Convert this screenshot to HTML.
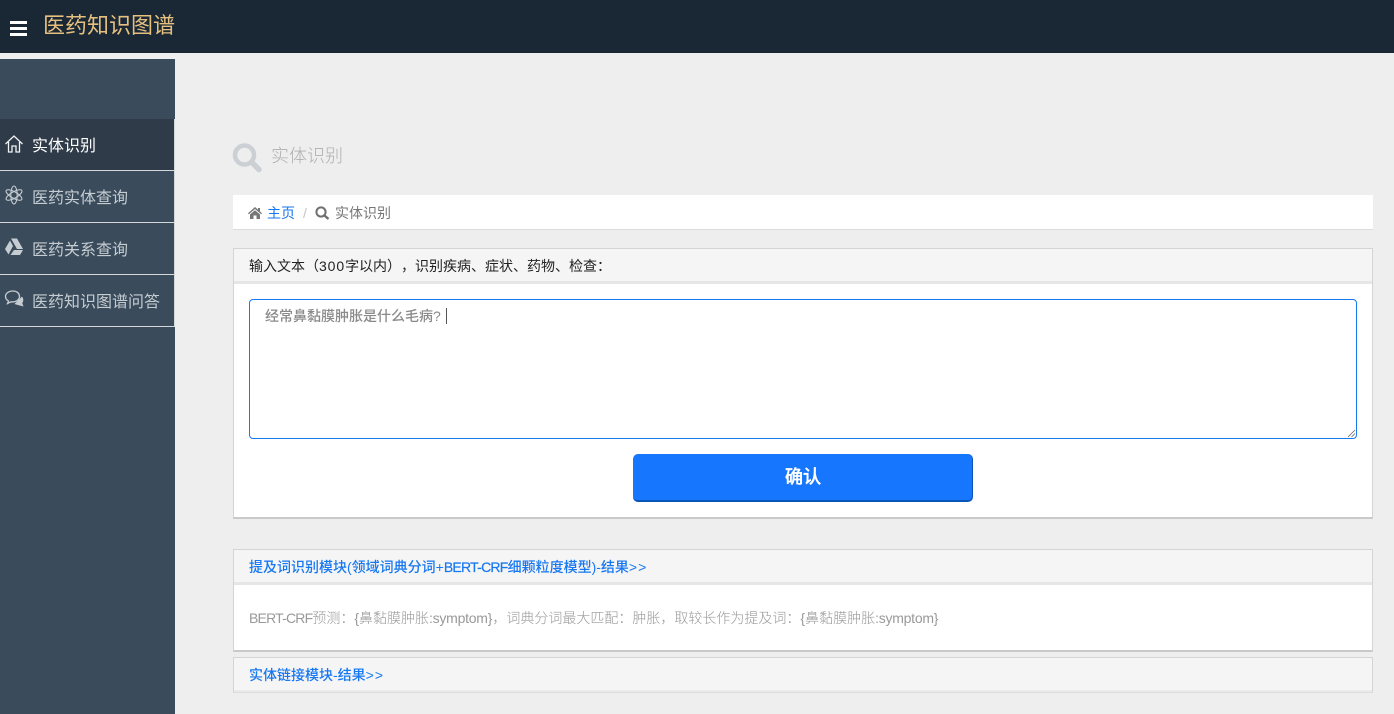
<!DOCTYPE html>
<html lang="zh"><head><meta charset="utf-8"><title>医药知识图谱</title>
<style>
*{box-sizing:border-box}
html,body{margin:0;padding:0;width:1394px;height:714px;overflow:hidden;background:#eeeeee;font-family:"Liberation Sans","Noto Sans CJK SC",sans-serif}
.a{position:absolute;white-space:nowrap;text-spacing-trim:space-all}
.z{font-family:"Liberation Sans","WenQuanYi Zen Hei",sans-serif}
.n{font-family:"Liberation Sans","Noto Sans CJK SC",sans-serif}
.item{position:absolute;left:0;width:175px;height:52px;border-bottom:1px solid #d5d8da;border-right:1px solid #d5d8da;background:#3a4b5b}
.item span{position:absolute;left:32px;top:16px;font-size:16px;line-height:24px;color:#c5ccd2}
.item svg{position:absolute;left:4px;top:14px}
.box{position:absolute;left:233px;width:1140px;background:#fff;border:1px solid #d4d4d4;border-bottom:2px solid #c9c9c9}
.head{background:#f5f5f5;border-bottom:3px solid #e6e6e6}
.l{letter-spacing:-.25px}
.b{letter-spacing:-.75px;-webkit-text-stroke:.2px #1677f2}
</style></head><body>
<div class="a" style="left:0;top:0;width:1394px;height:53px;background:#1a2735"></div>
<div class="a" style="left:10px;top:21px;width:17px;height:3px;background:#fff"></div>
<div class="a" style="left:10px;top:27px;width:17px;height:3px;background:#fff"></div>
<div class="a" style="left:10px;top:33px;width:17px;height:3px;background:#fff"></div>
<div class="a z" style="left:43px;top:12px;font-size:22px;line-height:28px;color:#e5c07f">医药知识图谱</div>

<div class="a" style="left:0;top:59px;width:175px;height:655px;background:#3a4b5b"></div>
<div class="item" style="top:119px;background:#2f3b48">
<svg style="top:15px" width="20" height="20" viewBox="0 0 20 20" fill="none" stroke="#f0f2f3" stroke-width="1.3"><path d="M1.5 10 L10 2 L18.500 10 M4.500 8 V18 H8 V12 H12 V18 H15.500 V8"/></svg>
<span style="color:#fff">实体识别</span></div>
<div class="item" style="top:171px">
<svg width="20" height="20" viewBox="0 0 20 20" fill="none" stroke="#c5ccd2" stroke-width="1.1"><ellipse cx="10" cy="10" rx="9" ry="3.200" transform="rotate(90 10 10)"/><ellipse cx="10" cy="10" rx="9" ry="3.200" transform="rotate(30 10 10)"/><ellipse cx="10" cy="10" rx="9" ry="3.200" transform="rotate(150 10 10)"/></svg>
<span>医药实体查询</span></div>
<div class="item" style="top:223px">
<svg width="20" height="20" viewBox="0 0 20 20" fill="#c5ccd2"><path d="M7 1.500H13L19 12H13Z M6 3.500L9 9L4.500 17.500L1 12Z M10 13H19L16 18H6.500Z"/></svg>
<span>医药关系查询</span></div>
<div class="item" style="top:275px">
<svg width="20" height="20" viewBox="0 0 20 20" fill="none" stroke="#c5ccd2" stroke-width="1.3"><path d="M9 2C4.500 2 1.500 4.500 1.500 7.500C1.500 9.500 2.800 11 4.500 12L3.500 14.500L7 12.800C11.500 13.500 15.500 11 15.500 7.500C15.500 4.500 13 2 9 2Z"/><path d="M17.500 8C19.500 10.500 18.500 13 17.500 14L18.500 16.500L14.500 15.500L11 14.500" fill="#c5ccd2"/></svg>
<span>医药知识图谱问答</span></div>

<svg class="a" style="left:232px;top:142px" width="31" height="31" viewBox="0 0 31 31" fill="none" stroke="#ccd0d4"><circle cx="12.500" cy="13" r="9.500" stroke-width="4.500"/><path d="M19.500 20L27 27.500" stroke-width="5.500" stroke-linecap="round"/></svg>
<div class="a n" style="left:271px;top:143px;font-size:18px;line-height:26px;color:#b0b0b0;font-weight:300">实体识别</div>

<div class="a" style="left:233px;top:195px;width:1140px;height:35px;background:#fff;border-bottom:1px solid #dcdcdc"></div>
<svg class="a" style="left:248px;top:207px" width="14" height="12" viewBox="0 0 14 12" fill="#777"><path d="M7 0L10 2.600V1H12V4.400L14 6.200L13.200 7.200L7 2L.8 7.200L0 6.200Z M2 7.400L7 3.200L12 7.400V12H8.500V8.500H5.500V12H2Z"/></svg>
<div class="a n" style="left:267px;top:203px;font-size:14px;line-height:20px;color:#1677f2">主页</div>
<div class="a n" style="left:303px;top:203px;font-size:14px;line-height:20px;color:#c4c4c4">/</div>
<svg class="a" style="left:315px;top:206px" width="15" height="14" viewBox="0 0 15 14" fill="none" stroke="#707070"><circle cx="6" cy="6" r="4.600" stroke-width="2"/><path d="M9.500 9.500L13.500 13" stroke-width="2.400"/></svg>
<div class="a n" style="left:335px;top:203px;font-size:14px;line-height:20px;color:#777">实体识别</div>

<div class="box" style="top:248px;height:271px">
<div class="head" style="height:35px"></div>
</div>
<div class="a n" style="left:249px;top:256px;font-size:14px;line-height:20px;color:#222">输入文本（<span style="letter-spacing:.9px">300</span>字以内），识别疾病、症状、药物、检查：</div>
<div class="a" style="left:249px;top:299px;width:1108px;height:140px;background:#fff;border:1px solid #1677f2;border-radius:4px"></div>
<div class="a n" style="left:265px;top:306px;font-size:14px;line-height:20px;color:#8a8a8a;font-weight:500">经常鼻黏膜肿胀是什么毛病?</div>
<div class="a" style="left:446px;top:308px;width:1px;height:16px;background:#555"></div>
<svg class="a" style="left:1347px;top:429px" width="9" height="9" viewBox="0 0 9 9" stroke="#666" stroke-width=".8"><path d="M1 8L8 1M4.500 8L8 4.500"/></svg>
<div class="a" style="left:633px;top:454px;width:340px;height:48px;background:#1677fe;border-radius:5px;border-right:1px solid #0a56b8;border-bottom:2px solid #0a56b8"></div>
<div class="a z" style="left:633px;top:465px;width:340px;text-align:center;font-size:18px;line-height:25px;font-weight:bold;color:#fff">确认</div>

<div class="box" style="top:549px;height:103px">
<div class="head" style="height:35px"></div>
</div>
<div class="a n" style="left:249px;top:557px;font-size:14px;line-height:20px;color:#1677f2;font-weight:500">提及词识别模块(领域词典分词+<span class="b">BERT-CRF</span>细颗粒度模型)-结果<span style="letter-spacing:1px">&gt;&gt;</span></div>
<div class="a n" style="left:249px;top:608px;font-size:14px;line-height:20px;color:#999;font-weight:300"><span style="letter-spacing:-.8px">BERT-CRF</span>预测：{鼻黏膜肿胀<span class="l">:symptom</span>}，词典分词最大匹配：肿胀，取较长作为提及词：{鼻黏膜肿胀<span class="l">:symptom</span>}</div>

<div class="box" style="top:657px;height:36px;border-bottom:2px solid #dcdcdc">
<div class="head" style="height:34px;border-bottom:2px solid #eaeaea"></div>
</div>
<div class="a n" style="left:249px;top:665px;font-size:14px;line-height:20px;color:#1677f2;font-weight:500">实体链接模块-结果<span style="letter-spacing:1px">&gt;&gt;</span></div>
</body></html>
